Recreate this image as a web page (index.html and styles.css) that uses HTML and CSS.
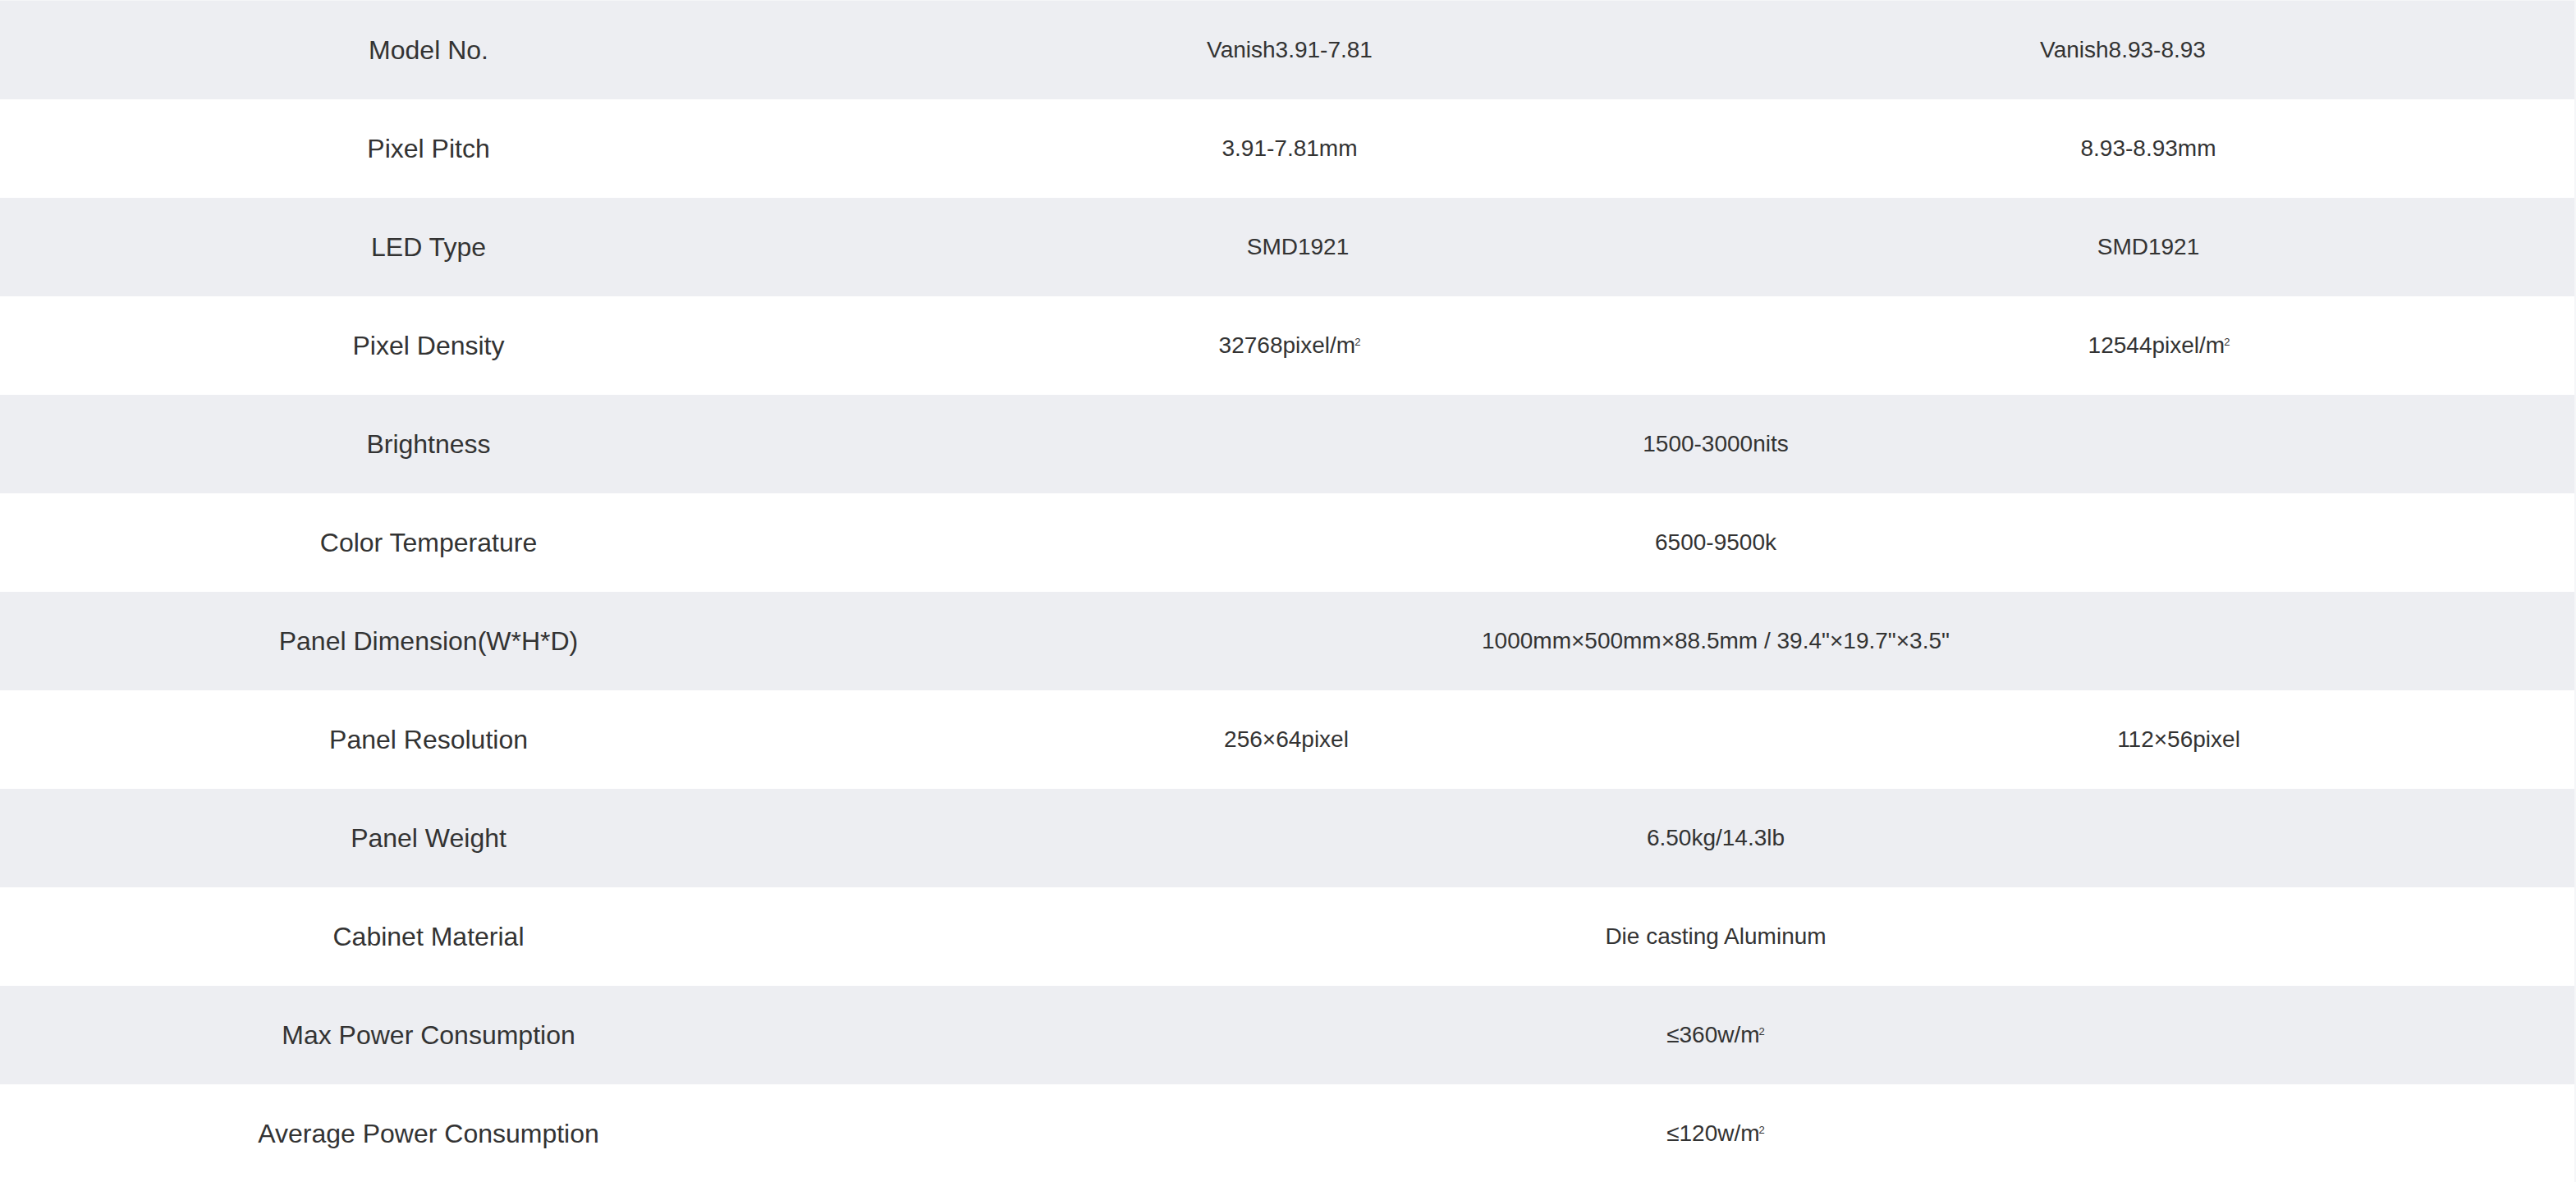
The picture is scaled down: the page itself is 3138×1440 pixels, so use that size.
FILE: index.html
```html
<!DOCTYPE html>
<html lang="en">
<head>
<meta charset="utf-8">
<title>Specifications</title>
<link rel="stylesheet" href="styles.css">
</head>
<body>
<table class="spec">
  <colgroup>
    <col class="c-label">
    <col class="c-a">
    <col class="c-b">
  </colgroup>
  <tbody>
    <tr class="alt">
      <td class="label">Model No.</td>
      <td>Vanish3.91-7.81</td>
      <td class="pad-r62">Vanish8.93-8.93</td>
    </tr>
    <tr>
      <td class="label">Pixel Pitch</td>
      <td>3.91-7.81mm</td>
      <td>8.93-8.93mm</td>
    </tr>
    <tr class="alt">
      <td class="label">LED Type</td>
      <td class="pad-l20">SMD1921</td>
      <td>SMD1921</td>
    </tr>
    <tr>
      <td class="label">Pixel Density</td>
      <td>32768pixel/m<span class="sq">2</span></td>
      <td class="pad-l26">12544pixel/m<span class="sq">2</span></td>
    </tr>
    <tr class="alt">
      <td class="label">Brightness</td>
      <td colspan="2">1500-3000nits</td>
    </tr>
    <tr>
      <td class="label">Color Temperature</td>
      <td colspan="2">6500-9500k</td>
    </tr>
    <tr class="alt">
      <td class="label">Panel Dimension(W*H*D)</td>
      <td colspan="2">1000mm×500mm×88.5mm / 39.4"×19.7"×3.5"</td>
    </tr>
    <tr>
      <td class="label">Panel Resolution</td>
      <td class="pad-r8">256×64pixel</td>
      <td class="pad-l74">112×56pixel</td>
    </tr>
    <tr class="alt">
      <td class="label">Panel Weight</td>
      <td colspan="2">6.50kg/14.3lb</td>
    </tr>
    <tr>
      <td class="label">Cabinet Material</td>
      <td colspan="2">Die casting Aluminum</td>
    </tr>
    <tr class="alt">
      <td class="label">Max Power Consumption</td>
      <td colspan="2">≤360w/m<span class="sq">2</span></td>
    </tr>
    <tr>
      <td class="label">Average Power Consumption</td>
      <td colspan="2">≤120w/m<span class="sq">2</span></td>
    </tr>
  </tbody>
</table>
</body>
</html>
```

FILE: styles.css
```css
html, body {
  margin: 0;
  padding: 0;
}

body {
  background: #f5f6f8;
  font-family: "Liberation Sans", Arial, Helvetica, sans-serif;
  color: #333333;
  overflow: hidden;
}

.spec {
  margin-top: 1px;
  width: 3136px;
  border-collapse: collapse;
  border-spacing: 0;
  table-layout: fixed;
  background: #ffffff;
}

.c-label { width: 1044px; }
.c-a { width: 1054px; }
.c-b { width: 1038px; }

.spec td {
  height: 120px;
  padding: 0;
  text-align: center;
  vertical-align: middle;
  font-size: 28px;
  line-height: 32px;
  white-space: nowrap;
}

.spec td.label {
  font-size: 32px;
}

.spec tr.alt td {
  background: #edeef2;
}

.sq {
  font-size: 13px;
  vertical-align: 9px;
  line-height: 0;
  margin-left: -1px;
}

.pad-r62 { padding-right: 62px !important; }
.pad-r8 { padding-right: 8px !important; }
.pad-l20 { padding-left: 20px !important; }
.pad-l26 { padding-left: 26px !important; }
.pad-l74 { padding-left: 74px !important; }
```
